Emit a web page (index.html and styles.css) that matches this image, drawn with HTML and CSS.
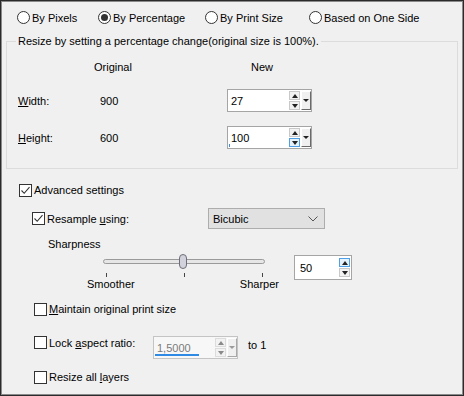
FILE: index.html
```html
<!DOCTYPE html>
<html lang="en">
  <head>
    <meta charset="UTF-8" />
    <title>Resize</title>
    <link rel="stylesheet" href="styles.css">
  </head>
  <body>
    <div class="dialog">

      <!-- Resize mode -->
      <div class="modes">
        <label class="radio"><span class="dot"></span><span>By Pixels</span></label>
        <label class="radio on"><span class="dot"></span><span>By Percentage</span></label>
        <label class="radio"><span class="dot"></span><span>By Print Size</span></label>
        <label class="radio"><span class="dot"></span><span>Based on One Side</span></label>
      </div>

      <!-- Percentage group -->
      <fieldset class="group">
        <legend>Resize by setting a percentage change(original size is 100%).</legend>
        <div class="size-table">
          <div></div>
          <div class="head orig">Original</div>
          <div class="head new">New</div>

          <div><u>W</u>idth:</div>
          <div>900</div>
          <div class="spin">
            <span class="val">27</span>
            <span class="arrows"><span class="arr up"></span><span class="arr down"></span></span>
            <span class="drop"></span>
          </div>

          <div><u>H</u>eight:</div>
          <div>600</div>
          <div class="spin">
            <span class="caret"></span>
            <span class="val">100</span>
            <span class="arrows"><span class="arr up"></span><span class="arr down hot"></span></span>
            <span class="drop"></span>
          </div>
        </div>
      </fieldset>

      <!-- Advanced -->
      <div class="row adv">
        <label class="check on"><span class="box"><svg width="11" height="11" viewBox="0 0 11 11"><path d="M1.5 5.5 L4.2 8.3 L9.5 2.2" fill="none" stroke="#333" stroke-width="1.1"/></svg></span><span>Advanced settings</span></label>
      </div>

      <div class="row resample">
        <label class="check on"><span class="box"><svg width="11" height="11" viewBox="0 0 11 11"><path d="M1.5 5.5 L4.2 8.3 L9.5 2.2" fill="none" stroke="#333" stroke-width="1.1"/></svg></span><span>Resample <u>u</u>sing:</span></label>
        <div class="select">
          <span>Bicubic</span>
          <svg width="10" height="6" viewBox="0 0 10 6"><path d="M0.5 0.5 L5 5 L9.5 0.5" fill="none" stroke="#555" stroke-width="1"/></svg>
        </div>
      </div>

      <div class="row sharp-label">Sharpness</div>

      <div class="row sharp">
        <div class="slider">
          <div class="rail">
            <div class="track"></div>
            <div class="thumb"></div>
          </div>
          <div class="ticks"><span></span><span></span><span></span></div>
          <div class="ends"><span>Smoother</span><span>Sharper</span></div>
        </div>
        <div class="spin small">
          <span class="val">50</span>
          <span class="arrows"><span class="arr up hot"></span><span class="arr down"></span></span>
        </div>
      </div>

      <div class="row opt maintain">
        <label class="check"><span class="box"></span><span><u>M</u>aintain original print size</span></label>
      </div>

      <div class="row opt lock">
        <label class="check"><span class="box"></span><span>Lock <u>a</u>spect ratio:</span></label>
        <div class="spin off">
          <span class="val">1,5000</span>
          <span class="bar"></span>
          <span class="arrows"><span class="arr up"></span><span class="arr down"></span></span>
          <span class="drop"></span>
        </div>
        <span class="to">to 1</span>
      </div>

      <div class="row opt layers">
        <label class="check"><span class="box"></span><span>Resize all <u>l</u>ayers</span></label>
      </div>

    </div>
  </body>
</html>
```

FILE: styles.css
```css
* {
  box-sizing: border-box;
}

body {
  margin: 0;
  font-family: "Liberation Sans", Arial, sans-serif;
  font-size: 11px;
  color: #000;
  background: #f0f0f0;
}

.dialog {
  width: 464px;
  height: 396px;
  border: 1px solid #2b2b2b;
  box-shadow: inset 0 0 0 1px #8a8a8a;
  background: #f0f0f0;
  display: flex;
  flex-direction: column;
}

u {
  text-decoration-thickness: 1px;
  text-underline-offset: 1px;
}

/* radios */
.modes {
  height: 33px;
  display: flex;
  align-items: center;
  padding-left: 16px;
}

.radio {
  display: flex;
  align-items: center;
  gap: 2px;
  white-space: nowrap;
}

.radio:nth-child(1) { width: 81px; }
.radio:nth-child(2) { width: 107px; }
.radio:nth-child(3) { width: 104px; }

.radio .dot {
  width: 13px;
  height: 13px;
  border: 1px solid #333;
  border-radius: 50%;
  background: #fff;
  display: flex;
  align-items: center;
  justify-content: center;
}

.radio.on .dot::after {
  content: "";
  width: 7px;
  height: 7px;
  border-radius: 50%;
  background: #333;
}

/* group box */
.group {
  margin: 0 5px;
  padding: 10px 0 19px 0;
  border: 1px solid #dcdcdc;
  min-width: 0;
}

.group legend {
  margin-left: 9px;
  padding: 0 2px;
  line-height: 14px;
}

.size-table {
  display: grid;
  grid-template-columns: 82px 127px 85px;
  grid-template-rows: 17px 23px 23px;
  row-gap: 14px;
  align-items: center;
  padding-left: 11px;
}

.head.orig {
  margin-left: -6px;
}

.head.new {
  padding-left: 24px;
}

/* spin boxes */
.spin {
  position: relative;
  display: flex;
  align-items: center;
  width: 85px;
  height: 23px;
  border: 1px solid #a5a5a5;
  background: #fff;
  padding: 1px 0 1px 3px;
}

.spin .val {
  flex: 1;
}

.spin .arrows {
  display: flex;
  flex-direction: column;
  gap: 1px;
  margin-right: 1px;
}

.spin .arr {
  width: 11px;
  height: 9px;
  border: 1px solid #c9c9c9;
  background: #f2f2f2;
  display: flex;
  align-items: center;
  justify-content: center;
}

.spin .arr::after {
  content: "";
  border-left: 3px solid transparent;
  border-right: 3px solid transparent;
}

.spin .arr.up::after {
  border-bottom: 4px solid #222;
}

.spin .arr.down::after {
  border-top: 4px solid #222;
}

.spin .arr.hot {
  border-color: #4f9fe6;
  background: #e5f1fb;
}

.spin .drop {
  width: 10px;
  height: 19px;
  border: 1px solid;
  border-color: #fff #6a6a6a #6a6a6a #fff;
  background: #f0f0f0;
  display: flex;
  align-items: center;
  justify-content: center;
}

.spin .drop::after {
  content: "";
  border-left: 3px solid transparent;
  border-right: 3px solid transparent;
  border-top: 3px solid #222;
}

.spin .caret {
  position: absolute;
  left: 1px;
  bottom: 1px;
  width: 1px;
  height: 3px;
  background: #3c8ce7;
}

.spin.small {
  width: 58px;
  height: 25px;
  margin-left: 15px;
  margin-top: 4px;
  padding-left: 5px;
}

.spin.off {
  background: #f7f7f7;
  border-color: #c4c4c4;
}

.spin.off .val {
  color: #7b7b7b;
}

.spin.off .bar {
  position: absolute;
  left: 1px;
  bottom: 2px;
  width: 44px;
  height: 2px;
  background: #2f8ae5;
}

.spin.off .arr {
  border-color: #dcdcdc;
}

.spin.off .arr::after {
  border-top-color: #8a8a8a;
  border-bottom-color: #8a8a8a;
}

.spin.off .drop {
  border-color: #fff #a8a8a8 #a8a8a8 #fff;
}

.spin.off .drop::after {
  border-top-color: #9a9a9a;
}

/* lower options */
.row {
  display: flex;
  align-items: center;
}

.check {
  display: flex;
  align-items: center;
  gap: 2px;
  white-space: nowrap;
}

.check .box {
  width: 13px;
  height: 13px;
  border: 1px solid #333;
  background: #fff;
  display: flex;
  align-items: center;
  justify-content: center;
  flex-shrink: 0;
}

.adv {
  height: 16px;
  margin-top: 13px;
  padding-left: 18px;
}

.resample {
  height: 21px;
  margin-top: 10px;
  padding-left: 31px;
}

.resample .check {
  width: 176px;
}

.select {
  width: 117px;
  height: 21px;
  border: 1px solid #adadad;
  background: #e1e1e1;
  display: flex;
  align-items: center;
  justify-content: space-between;
  padding: 0 6px 0 4px;
}

.sharp-label {
  height: 14px;
  margin-top: 8px;
  padding-left: 47px;
}

.sharp {
  align-items: flex-start;
  padding-left: 86px;
}

.slider {
  width: 192px;
}

.rail {
  position: relative;
  height: 20px;
  display: flex;
  align-items: center;
  padding-left: 16px;
}

.track {
  width: 162px;
  height: 5px;
  border: 1px solid #9a9a9a;
  border-radius: 3px;
  background: #e6e6e6;
}

.thumb {
  position: absolute;
  left: 92px;
  top: 3px;
  width: 8px;
  height: 15px;
  border: 1px solid #6e6e78;
  border-radius: 4px;
  background: #d2d2dc;
}

.ticks {
  height: 4px;
  margin-top: 2px;
  display: flex;
  justify-content: space-between;
  padding: 0 16px 0 19px;
}

.ticks span {
  width: 1px;
  height: 4px;
  background: #444;
}

.ends {
  height: 14px;
  display: flex;
  justify-content: space-between;
  align-items: center;
}

.opt {
  padding-left: 33px;
}

.maintain {
  height: 16px;
  margin-top: 10px;
}

.lock {
  height: 21px;
  margin-top: 19px;
  align-items: flex-start;
}

.lock .check {
  width: 119px;
}

.lock .to {
  margin-left: 10px;
  margin-top: 3px;
}

.layers {
  height: 14px;
  margin-top: 13px;
}
```
